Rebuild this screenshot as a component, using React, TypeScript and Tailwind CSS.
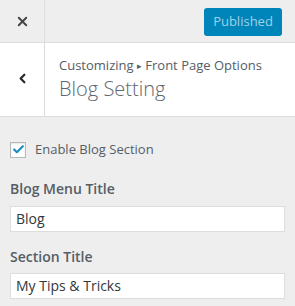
import { X, ChevronLeft, Check } from 'lucide-react';

export default function App() {
  const font = { fontFamily: "'Open Sans', 'Noto Sans', sans-serif" };

  return (
    <div className="w-[295px] h-[306px] bg-[#eeeeee] text-[#555d66] overflow-hidden" style={font}>
      {/* Top bar */}
      <div className="flex h-[43px] border-b border-[#dddddd] bg-[#eeeeee]">
        <div className="w-[45px] border-r border-[#dddddd] flex items-center justify-center pt-px">
          <X className="w-[15px] h-[15px] text-[#444]" strokeWidth={3} />
        </div>
        <div className="flex-1 flex items-center justify-end pr-[13px] pt-px">
          <div className="w-[78px] h-[28px] rounded-[3px] bg-[#0085ba] text-[#9fd1e8] text-[13px] flex items-center justify-center">
            Published
          </div>
        </div>
      </div>

      {/* Section header */}
      <div className="flex h-[74px] bg-white border-b border-[#dddddd]">
        <div className="w-[45px] border-r border-[#dddddd] flex items-center justify-center pb-[2px]">
          <ChevronLeft className="w-[15px] h-[15px] text-[#23282d]" strokeWidth={3.5} />
        </div>
        <div className="flex-1 pl-[14px] pt-[13px]">
          <div className="text-[13px] leading-[18px] text-[#555d66]">
            Customizing <span className="text-[9px] align-[1px]">▸</span> Front Page Options
          </div>
          <div className="text-[20px] leading-[28px] font-light text-[#5f666d]">Blog Setting</div>
        </div>
      </div>

      {/* Controls */}
      <div className="px-[10px] pt-[23px]">
        <label className="flex items-center gap-[9px] text-[13px] text-[#555d66]">
          <span className="w-[16px] h-[16px] border border-[#b4b9be] bg-white flex items-center justify-center shadow-[inset_0_1px_2px_rgba(0,0,0,0.1)]">
            <Check className="w-[13px] h-[13px] text-[#1e8cbe]" strokeWidth={4} />
          </span>
          Enable Blog Section
        </label>

        <div className="mt-[19px] text-[14px] font-semibold leading-[20px] text-[#555d66]">Blog Menu Title</div>
        <div className="mt-[7px] h-[26px] w-[275px] border border-[#dddddd] bg-white px-[5px] flex items-center text-[14px] text-[#32373c]">
          Blog
        </div>

        <div className="mt-[15px] text-[14px] font-semibold leading-[20px] text-[#555d66]">Section Title</div>
        <div className="mt-[6px] h-[26px] w-[275px] border border-[#dddddd] bg-white px-[5px] flex items-center text-[14px] text-[#32373c]">
          My Tips &amp; Tricks
        </div>
      </div>
    </div>
  );
}
